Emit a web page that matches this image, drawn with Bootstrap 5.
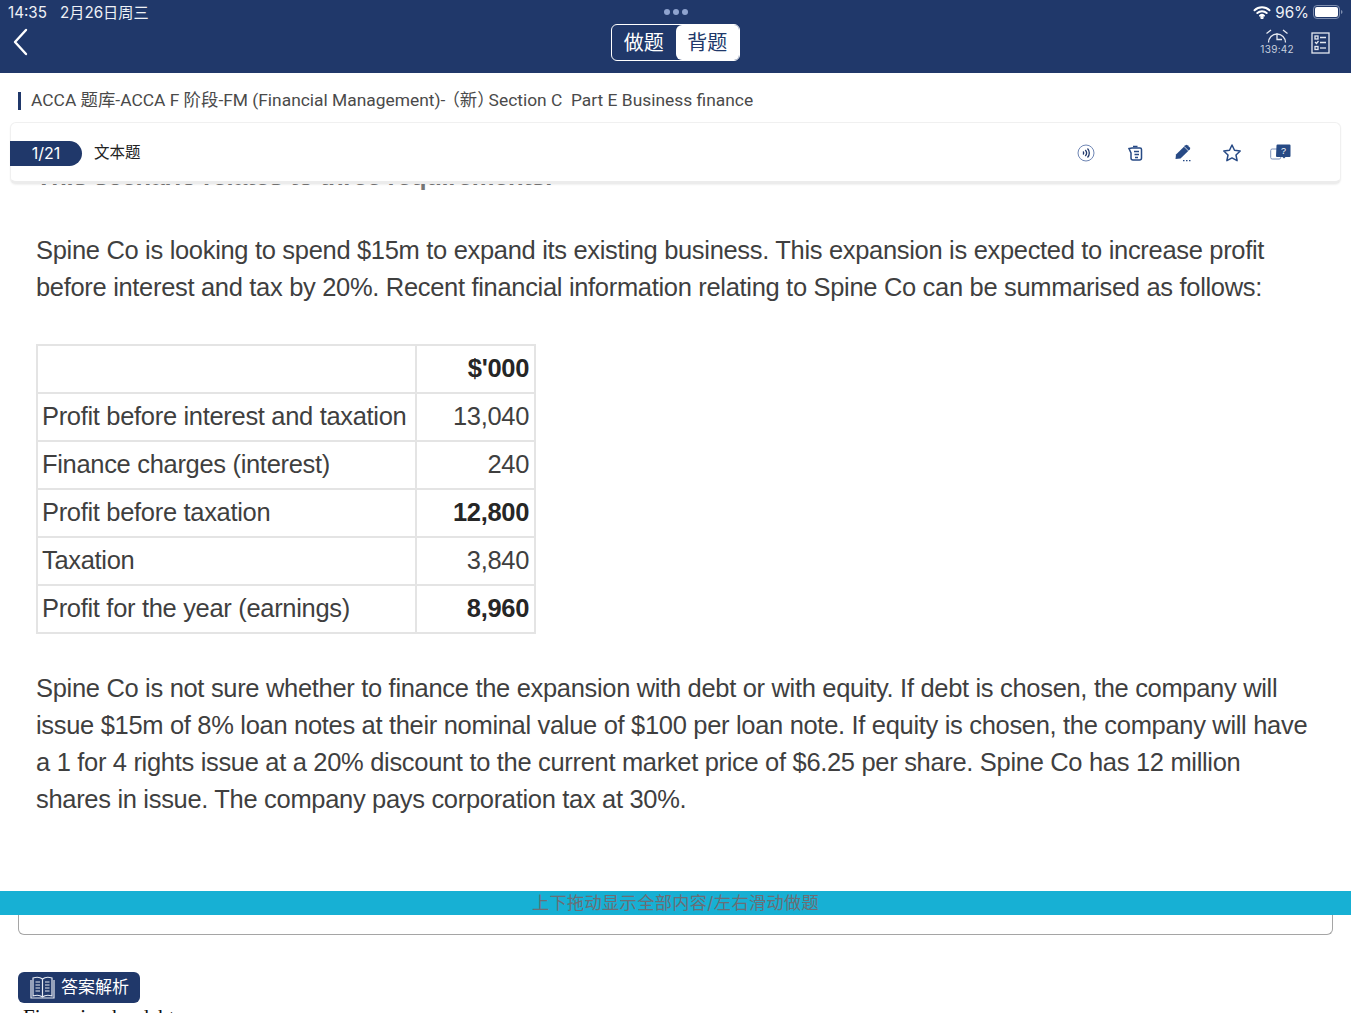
<!DOCTYPE html>
<html lang="zh-CN">
<head>
<meta charset="utf-8">
<title>ACCA</title>
<link rel="stylesheet" href="https://cdn.jsdelivr.net/npm/bootstrap@5.3.0/dist/css/bootstrap.min.css">
<style>
html,body{height:100%;overflow:hidden}
body{font-family:"Inter","Noto Sans CJK SC",sans-serif;background:#fff;color:#222}
.shell{height:1013px;overflow:hidden}
.topbar{height:73px;background:#20386a;color:#fff;flex:none;position:relative}
.statusrow{height:24px;padding:0 8px 0;font-size:15.2px;line-height:23px;color:#eef1f6}
.statusrow .when{gap:13px}
.dots{gap:3px}
.dots i{display:block;width:6px;height:6px;border-radius:50%;background:#8ea3cf}
.navrow{height:49px;padding:0 21px 0 12px;position:relative}
.segwrap{position:absolute;left:611px;top:0;width:129px;height:37px}
.seg{width:100%;height:37px;border:1px solid #fff;border-radius:6px;overflow:hidden;display:flex}
.seg span{flex:1;font-size:20px;line-height:37px;text-align:center}
.seg .onn{background:#fff;color:#20386a;border-radius:6px 0 0 6px}
.timer{font-size:10px;line-height:10px;color:#c7cfdf;letter-spacing:.3px;margin-right:17px;text-align:center;margin-top:5px}
.timer svg{display:block;margin:0 auto 1px}
.listicon{margin-top:8px}
.crumb{height:49px;flex:none;padding:6px 18px 0;font-family:"Roboto","Noto Sans CJK SC",sans-serif;font-size:17.4px;color:#4a4a4a;white-space:pre}
.crumb b{display:block;width:3px;height:18px;background:#20386a;margin-right:10px}
.parens{margin:0 -6px 0 -3px}
.toolcard{height:62px;margin:0 10px;flex:none;border:1px solid #f0f0f0;border-bottom:3px solid #ececec;border-radius:6px;background:#fff;position:relative;z-index:2;box-shadow:0 1px 2px rgba(0,0,0,.06);padding-top:2px}
.pill{width:72px;height:25px;background:#20386a;color:#fff;border-radius:0 13px 13px 0;font-size:16px;line-height:25px;text-align:center;font-weight:400;margin-left:-1px}
.qtype{font-size:15.5px;color:#222;margin-left:12px}
.tools{gap:28.5px;margin-right:49px}
.tools svg{display:block}
.reading{flex:1 1 0;overflow:hidden;padding:0 36px;font-family:"Liberation Sans",Arial,sans-serif;font-size:25.5px;letter-spacing:-.32px;line-height:37px;color:#3f3f3f;min-height:0}
.clipline{font-weight:700;margin:-26px 0 0;height:37px;white-space:nowrap;color:#777}
.para{margin:0;white-space:nowrap}
.para.one{margin-top:37px}
.para.two{margin-top:36px}
.figs{width:500px;margin:38px 0 0;border:2px solid #e4e4e4;border-collapse:collapse;table-layout:fixed;line-height:32px;color:#3f3f3f}
.figs td{border:2px solid #e4e4e4;height:48px;padding:0 5px 2px 4px;white-space:nowrap;vertical-align:middle}
.figs td:first-child{width:379px}
.figs td:last-child{text-align:right}
.figs .fw-bold{color:#262626}
.dragbar{height:24px;flex:none;background:#17b0d4;color:#6b6e76;font-size:17.2px;line-height:24px;text-align:center;letter-spacing:.35px}
.answerbox{height:20px;margin:0 18px;flex:none;border:1px solid #a5a5a5;border-top:0;border-radius:0 0 6px 6px}
.answertag{margin:37px 0 0 18px;width:122px;height:31px;flex:none;background:#20386a;color:#fff;border-radius:6px;font-size:17px;gap:6px;padding-left:12px}
.tailtext{padding-left:23px;font-family:"Liberation Serif",serif;font-size:21px;line-height:24px;color:#111;margin-top:2px;height:8px;flex:none}
</style>
</head>
<body>
<div class="shell d-flex flex-column">
  <header class="topbar">
    <div class="statusrow d-flex align-items-center justify-content-between">
      <div class="when d-flex"><span>14:35</span><span>2月26日周三</span></div>
      <div class="dots d-flex position-absolute start-50 translate-middle-x"><i></i><i></i><i></i></div>
      <div class="d-flex align-items-center">
        <svg width="18" height="14" viewBox="0 0 18 14" fill="none" stroke="#fff" stroke-width="2" stroke-linecap="round"><path d="M1.500 5.200a11 11 0 0 1 15 0"/><path d="M4.300 8a7 7 0 0 1 9.400 0"/><path d="M7 10.700a3.200 3.200 0 0 1 4 0"/><circle cx="9" cy="12.500" r=".7"/></svg>
        <span class="ms-1">96%</span>
        <svg class="ms-1" width="30" height="14" viewBox="0 0 30 14"><rect x=".5" y=".5" width="26" height="13" rx="3.500" fill="none" stroke="#7f8fb0"/><rect x="2" y="2" width="23" height="10" rx="2" fill="#fff"/><path d="M28 5v4a2 2 0 0 0 1.500-2 2 2 0 0 0-1.500-2z" fill="#7f8fb0"/></svg>
      </div>
    </div>
    <nav class="navrow d-flex align-items-start justify-content-between">
      <svg class="mt-1" width="16" height="28" viewBox="0 0 16 28" fill="none" stroke="#fff" stroke-width="2.400" stroke-linecap="round" stroke-linejoin="round"><path d="M14 2 3 14l11 12"/></svg>
      <div class="segwrap"><div class="seg"><span>做题</span><span class="onn">背题</span></div></div>
      <div class="d-flex align-items-start">
        <div class="timer">
          <svg width="24" height="14" viewBox="0 0 24 14" fill="none" stroke="#e4e8f0" stroke-width="1.300"><path d="M3.500 13.500a8.500 8.500 0 1 1 17 0"/><path d="M12 4.500v6h5"/><path d="M1.500 4.500l4.500-3.500M22.500 4.500l-4.500-3.500"/></svg>
          139:42
        </div>
        <svg class="listicon" width="19" height="22" viewBox="0 0 19 22" fill="none" stroke="#e4e8f0" stroke-width="1.300"><rect x="1" y="1" width="17" height="20"/><rect x="4" y="4" width="3" height="3"/><path d="M9 5.500h6M4 10l1.500 1.500 2-2.500M9 10.500h6"/><rect x="4" y="14.500" width="3" height="3"/><path d="M9 16h6"/></svg>
      </div>
    </nav>
  </header>

  <div class="crumb d-flex align-items-center"><b></b><span>ACCA 题库-ACCA F 阶段-FM (Financial Management)-<span class="parens">（新）</span>Section C  Part E Business finance</span></div>

  <div class="toolcard d-flex align-items-center justify-content-between">
    <div class="d-flex align-items-center">
      <span class="pill">1/21</span><span class="qtype">文本题</span>
    </div>
    <div class="tools d-flex align-items-center">
      <svg width="20" height="20" viewBox="0 0 20 20" fill="none" stroke="#6f86b4"><circle cx="10" cy="10" r="8"/><path d="M7 8.500a2 2 0 0 1 0 3M9.300 7a4.500 4.500 0 0 1 0 6M11.500 5.500a6.500 6.500 0 0 1 0 9" stroke="#20386a" stroke-width="1.300"/></svg>
      <svg width="20" height="20" viewBox="0 0 20 20" fill="none" stroke="#274a85" stroke-width="1.500"><path d="M7 5h8a1.500 1.500 0 0 1 1.500 1.500V15a2 2 0 0 1-2 2H8a2 2 0 0 1-2-2V10L4 5.500z"/><path d="M8 3.500h4.500M9 8.500h5M9.500 11.500h4.500M10 14.500h3"/></svg>
      <svg width="20" height="20" viewBox="0 0 20 20"><path d="M2.500 16 3 11.500 12.500 2.200a1.500 1.500 0 0 1 2 0l2.300 2.300a1.500 1.500 0 0 1 0 2L7.500 15.500z" fill="#274a85"/><path d="M11.300 3.700l4.400 4.400" stroke="#fff" stroke-width=".8"/><path d="M10 17.700h1.500M13 17.700h1.500M16 17.700h1.500" stroke="#274a85" stroke-width="1.300"/></svg>
      <svg width="20" height="20" viewBox="0 0 20 20" fill="none" stroke="#274a85" stroke-width="1.500" stroke-linejoin="round"><path d="M10 2l2.500 5.300 5.700.7-4.200 4 1.100 5.700-5.100-2.800-5.100 2.800L6 12 1.800 8l5.700-.7z"/></svg>
      <svg width="21" height="20" viewBox="0 0 21 20"><rect x=".7" y="6" width="10" height="10" rx="1.500" fill="none" stroke="#7d92bb"/><path d="M6.500 2.500a1 1 0 0 1 1-1h12a1 1 0 0 1 1 1V13a1 1 0 0 1-1 1h-4l-1.500 1.500-1.500-1.500h-5.500a1 1 0 0 1-1-1z" fill="#274a85"/><text x="13.500" y="11" font-size="9" fill="#fff" text-anchor="middle" font-family="Liberation Sans">?</text></svg>
    </div>
  </div>

  <main class="reading">
    <p class="clipline">This scenario relates to three requirements.</p>
    <p class="para one">Spine Co is looking to spend $15m to expand its existing business. This expansion is expected to increase profit<br>before interest and tax by 20%. Recent financial information relating to Spine Co can be summarised as follows:</p>
    <table class="figs">
      <tr><td></td><td class="fw-bold">$'000</td></tr>
      <tr><td>Profit before interest and taxation</td><td>13,040</td></tr>
      <tr><td>Finance charges (interest)</td><td>240</td></tr>
      <tr><td>Profit before taxation</td><td class="fw-bold">12,800</td></tr>
      <tr><td>Taxation</td><td>3,840</td></tr>
      <tr><td>Profit for the year (earnings)</td><td class="fw-bold">8,960</td></tr>
    </table>
    <p class="para two">Spine Co is not sure whether to finance the expansion with debt or with equity. If debt is chosen, the company will<br>issue $15m of 8% loan notes at their nominal value of $100 per loan note. If equity is chosen, the company will have<br>a 1 for 4 rights issue at a 20% discount to the current market price of $6.25 per share. Spine Co has 12 million<br>shares in issue. The company pays corporation tax at 30%.</p>
  </main>

  <div class="dragbar">上下拖动显示全部内容/左右滑动做题</div>
  <div class="answerbox"></div>
  <div class="answertag d-flex align-items-center">
    <svg width="25" height="25" viewBox="0 0 25 25" fill="none" stroke="#e4e8f0" stroke-width="1.200"><path d="M12.500 4C10 2 6 2 3 3v18c3-1 7-1 9.500 1 2.500-2 6.500-2 9.500-1V3c-3-1-7-1-9.500 1z"/><path d="M12.500 4v18M1 5v18h23V5M5.500 7h4.500M5.500 10h4.500M5.500 13h4.500M5.500 16h4.500M15 7h4.500M15 10h4.500M15 13h4.500M15 16h4.500"/></svg>
    <span>答案解析</span>
  </div>
  <div class="tailtext">Financing by debt:</div>
</div>
<script src="https://cdn.jsdelivr.net/npm/bootstrap@5.3.0/dist/js/bootstrap.bundle.min.js"></script>
</body>
</html>
